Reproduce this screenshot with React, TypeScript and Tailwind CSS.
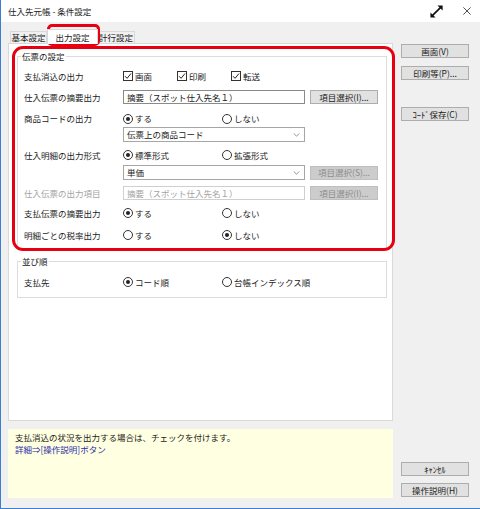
import type { ReactNode } from 'react';
import clsx from 'clsx';

function CheckItem({ label }: { label: string }) {
  return (
    <span className="flex w-[54px] items-center gap-[2px]">
      <span className="flex h-[10px] w-[10px] items-center justify-center border border-[#333] bg-white">
        <svg viewBox="0 0 8 8" className="h-[8px] w-[8px]">
          <path d="M1 4.2 L3.1 6.3 L7 1.5" fill="none" stroke="#222" strokeWidth="1" />
        </svg>
      </span>
      <span>{label}</span>
    </span>
  );
}

function RadioItem({ label, checked, className }: { label: string; checked?: boolean; className?: string }) {
  return (
    <span className={clsx('flex items-center gap-[2px]', className)}>
      <span className="flex h-[10px] w-[10px] items-center justify-center rounded-full border border-[#333] bg-white">
        {checked && <span className="h-[4px] w-[4px] rounded-full bg-[#222]" />}
      </span>
      <span>{label}</span>
    </span>
  );
}

function Row({ label, muted, className, children }: { label?: string; muted?: boolean; className?: string; children: ReactNode }) {
  return (
    <div className={clsx('flex items-center', className)}>
      <span className={clsx('w-[99px] shrink-0', muted && 'text-[#a3a3a3]')}>{label}</span>
      {children}
    </div>
  );
}

function TextBox({ value, disabled }: { value: string; disabled?: boolean }) {
  return (
    <div
      className={clsx(
        'flex h-[14px] w-[182px] items-center border pl-[3px]',
        disabled ? 'border-[#cfcfcf] bg-white text-[#a3a3a3]' : 'border-[#8a8a8a] bg-white'
      )}
    >
      {value}
    </div>
  );
}

function Select({ value }: { value: string }) {
  return (
    <div className="flex h-[15px] w-[182px] items-center justify-between border border-[#a6a6a6] bg-white pl-[3px] pr-[4px]">
      <span>{value}</span>
      <svg viewBox="0 0 8 5" className="h-[4px] w-[7px]">
        <path d="M0.5 0.5 L4 4 L7.5 0.5" fill="none" stroke="#777" strokeWidth="1" />
      </svg>
    </div>
  );
}

function Btn({ children, disabled, className }: { children: ReactNode; disabled?: boolean; className?: string }) {
  return (
    <div
      className={clsx(
        'flex h-[14px] w-[68px] shrink-0 items-center justify-center border',
        disabled ? 'border-[#bfbfbf] bg-[#cccccc] text-[#8c8c8c]' : 'border-[#adadad] bg-[#e1e1e1]',
        className
      )}
    >
      {children}
    </div>
  );
}

function Group({ title, children }: { title: string; children: ReactNode }) {
  return (
    <fieldset className="w-[370px] border border-[#dcdcdc]">
      <legend className="ml-[3px] px-[1px] leading-[12px]">{title}</legend>
      <div className="flex flex-col pl-[6px]">{children}</div>
    </fieldset>
  );
}

function TitleBar() {
  return (
    <div className="flex h-[22px] items-center bg-white pl-[7px]">
      <span>仕入先元帳 - 条件設定</span>
      <svg viewBox="0 0 16 16" className="ml-auto h-[15px] w-[15px]">
        <path d="M3 13 L13 3" stroke="#111" strokeWidth="1.8" />
        <path d="M1.5 9 L1.5 14.5 L7 14.5 Z" fill="#111" />
        <path d="M9 1.5 L14.5 1.5 L14.5 7 Z" fill="#111" />
      </svg>
      <svg viewBox="0 0 10 10" className="ml-[19px] mr-[9px] h-[8px] w-[8px]">
        <path d="M0.5 0.5 L9.5 9.5 M9.5 0.5 L0.5 9.5" stroke="#222" strokeWidth="1" />
      </svg>
    </div>
  );
}

export default function App() {
  return (
    <div className="relative h-[509px] w-[480px] overflow-hidden border-b border-l border-[#3b7fd4] bg-[#f0f0f0] font-['Noto_Sans_CJK_JP',sans-serif] text-[8.5px] leading-none text-[#1a1a1a]">
      <TitleBar />
      <div className="flex pl-[7px] pt-[7px]">
        <div className="flex w-[385px] flex-col">
          <div className="flex h-[14px] items-end">
            <div className="ml-[2px] flex h-[12px] w-[37px] items-center justify-center border border-b-0 border-[#d9d9d9] bg-[#f0f0f0]">
              基本設定
            </div>
            <div className="relative z-10 -mb-px flex h-[15px] w-[51px] items-center justify-center border border-b-0 border-[#d9d9d9] bg-white">
              出力設定
            </div>
            <div className="flex h-[12px] w-[37px] items-center justify-center border border-b-0 border-l-0 border-[#d9d9d9] bg-[#f0f0f0]">
              計行設定
            </div>
          </div>
          <div className="flex h-[378px] flex-col border border-[#d9d9d9] bg-white pl-[8px] pt-[6px]">
            <Group title="伝票の設定">
              <div className="h-[4px]" />
              <Row label="支払消込の出力" className="h-[20px]">
                <CheckItem label="画面" />
                <CheckItem label="印刷" />
                <CheckItem label="転送" />
              </Row>
              <Row label="仕入伝票の摘要出力" className="h-[22px]">
                <TextBox value="摘要（スポット仕入先名１）" />
                <Btn className="ml-[5px]">項目選択(I)...</Btn>
              </Row>
              <Row label="商品コードの出力" className="h-[19px] pt-[2px]">
                <RadioItem label="する" checked className="w-[99px]" />
                <RadioItem label="しない" />
              </Row>
              <Row className="h-[15px]">
                <Select value="伝票上の商品コード" />
              </Row>
              <Row label="仕入明細の出力形式" className="h-[23px] pt-[3px]">
                <RadioItem label="標準形式" checked className="w-[99px]" />
                <RadioItem label="拡張形式" />
              </Row>
              <Row className="h-[15px]">
                <Select value="単価" />
                <Btn disabled className="ml-[5px]">項目選択(S)...</Btn>
              </Row>
              <Row label="仕入伝票の出力項目" muted className="h-[24px] pt-[2px]">
                <TextBox value="摘要（スポット仕入先名１）" disabled />
                <Btn disabled className="ml-[5px]">項目選択(I)...</Btn>
              </Row>
              <Row label="支払伝票の摘要出力" className="h-[18px]">
                <RadioItem label="する" checked className="w-[99px]" />
                <RadioItem label="しない" />
              </Row>
              <Row label="明細ごとの税率出力" className="h-[26px]">
                <RadioItem label="する" className="w-[99px]" />
                <RadioItem label="しない" checked />
              </Row>
            </Group>
            <div className="h-[6px]" />
            <Group title="並び順">
              <Row label="支払先" className="h-[30px]">
                <RadioItem label="コード順" checked className="w-[99px]" />
                <RadioItem label="台帳インデックス順" />
              </Row>
            </Group>
          </div>
          <div className="mt-[8px] flex h-[69px] flex-col gap-[4px] bg-[#ffffe1] pl-[7px] pt-[4px] leading-[8px]">
            <span>支払消込の状況を出力する場合は、チェックを付けます。</span>
            <span className="text-[#2a2aa8]">詳細⇒[操作説明]ボタン</span>
          </div>
        </div>
        <div className="ml-[8px] flex w-[68px] flex-col pt-[15px]">
          <Btn>画面(V)</Btn>
          <Btn className="mt-[8px]">印刷等(P)...</Btn>
          <Btn className="mt-[27px]">ｺｰﾄﾞ保存(C)</Btn>
          <div className="flex-1" />
          <Btn>ｷｬﾝｾﾙ</Btn>
          <Btn className="mb-[1px] mt-[7px]">操作説明(H)</Btn>
        </div>
      </div>
      {/* red highlight frames */}
      <div className="pointer-events-none absolute left-[46px] top-[24px] h-[22px] w-[53px] rounded-[5px] border-[3px] border-[#e60012]" />
      <div className="pointer-events-none absolute left-[11px] top-[46px] h-[205px] w-[383px] rounded-[11px] border-[3px] border-[#e60012]" />
    </div>
  );
}
